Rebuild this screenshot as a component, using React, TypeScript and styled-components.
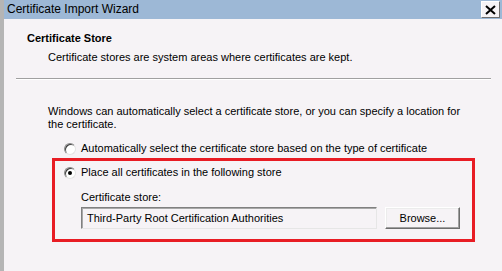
import React from 'react';
import styled, { createGlobalStyle } from 'styled-components';

const GlobalStyle = createGlobalStyle`
  html, body {
    margin: 0;
    padding: 0;
    background: #f6f3f6;
    overflow: hidden;
  }
  * {
    box-sizing: border-box;
  }
`;

const StyledWindow = styled.div`
  width: 502px;
  height: 271px;
  display: flex;
  background: #f6f3f6;
  font-family: 'Liberation Sans', Arial, sans-serif;
  font-size: 11px;
  line-height: 13px;
  color: #000;
`;

const StyledEdge = styled.div`
  width: 4px;
  background: #b5b5b5;
  flex-shrink: 0;
`;

const StyledMain = styled.div`
  flex: 1;
  display: flex;
  flex-direction: column;
`;

const StyledTitleBar = styled.header`
  height: 19px;
  background: #9db8d6;
  display: flex;
  align-items: center;
  justify-content: space-between;
  padding-left: 3px;
  padding-right: 2px;
  font-size: 12px;
`;

const StyledClose = styled.div`
  width: 19px;
  height: 17px;
  background: #f6f3f6;
  border-top: 1px solid #fff;
  border-left: 1px solid #fff;
  border-right: 1px solid #6e6e6e;
  border-bottom: 1px solid #6e6e6e;
  display: flex;
  align-items: center;
  justify-content: center;
`;

const StyledHeader = styled.section`
  padding: 13px 0 0 23px;
  height: 59px;
`;

const StyledHeading = styled.h1`
  margin: 0;
  font-size: 11px;
  line-height: 13px;
  font-weight: 700;
`;

const StyledSubHeading = styled.p`
  margin: 6px 0 0 21px;
`;

const StyledSeparator = styled.hr`
  margin: 0 0 0 12px;
  width: 475px;
  height: 2px;
  border: none;
  border-top: 1px solid #a0a0a0;
  border-bottom: 1px solid #fff;
`;

const StyledBody = styled.section`
  padding: 25px 0 0 44px;
  display: flex;
  flex-direction: column;
`;

const StyledText = styled.p`
  margin: 0;
  width: 420px;
`;

const StyledOptionRow = styled.label<{ inBox?: boolean }>`
  display: flex;
  align-items: center;
  gap: 5px;
  margin: ${({ inBox }) => (inBox ? '0' : '11px 0 0 16px')};
  height: 13px;
`;

const StyledRadio = styled.span<{ checked?: boolean }>`
  width: 12px;
  height: 12px;
  border-radius: 50%;
  background: #fff;
  border: 1px solid;
  border-color: #8a8a8a #e4e4e4 #e4e4e4 #8a8a8a;
  box-shadow: inset 1px 1px 0 #3f3f3f;
  display: flex;
  align-items: center;
  justify-content: center;
  flex-shrink: 0;
  &::after {
    content: '';
    width: 4px;
    height: 4px;
    border-radius: 50%;
    background: ${({ checked }) => (checked ? '#000' : 'transparent')};
  }
`;

const StyledGroup = styled.div`
  margin: 3px 0 0 4px;
  width: 423px;
  height: 84px;
  border: 3px solid #e81c24;
  padding: 5px 0 0 9px;
  display: flex;
  flex-direction: column;
`;

const StyledFieldLabel = styled.div`
  margin: 12px 0 0 17px;
`;

const StyledFieldRow = styled.div`
  display: flex;
  gap: 8px;
  margin: 3px 0 0 17px;
`;

const StyledInput = styled.div`
  width: 296px;
  height: 22px;
  padding: 0 5px;
  display: flex;
  align-items: center;
  border-top: 1px solid #808080;
  border-left: 1px solid #808080;
  border-right: 1px solid #e6e6e6;
  border-bottom: 1px solid #e6e6e6;
  box-shadow: inset 1px 1px 0 #a8a8a8;
  background: #f6f3f6;
  white-space: nowrap;
`;

const StyledButton = styled.button`
  width: 75px;
  height: 22px;
  padding: 0;
  font: inherit;
  color: #000;
  background: #f6f3f6;
  border-top: 1px solid #fff;
  border-left: 1px solid #fff;
  border-right: 1px solid #6e6e6e;
  border-bottom: 1px solid #6e6e6e;
  box-shadow: inset -1px -1px 0 #a0a0a0, inset 1px 1px 0 #ececec;
`;

const CloseIcon = () => (
  <svg width="11" height="10" viewBox="0 0 11 10">
    <path d="M1 1 L10 9 M10 1 L1 9" stroke="#000" strokeWidth="2" />
  </svg>
);

const App: React.FC = () => (
  <>
    <GlobalStyle />
    <StyledWindow>
      <StyledEdge />
      <StyledMain>
        <StyledTitleBar>
          <span>Certificate Import Wizard</span>
          <StyledClose>
            <CloseIcon />
          </StyledClose>
        </StyledTitleBar>
        <StyledHeader>
          <StyledHeading>Certificate Store</StyledHeading>
          <StyledSubHeading>Certificate stores are system areas where certificates are kept.</StyledSubHeading>
        </StyledHeader>
        <StyledSeparator />
        <StyledBody>
          <StyledText>
            Windows can automatically select a certificate store, or you can specify a location for the certificate.
          </StyledText>
          <StyledOptionRow>
            <StyledRadio />
            Automatically select the certificate store based on the type of certificate
          </StyledOptionRow>
          <StyledGroup>
            <StyledOptionRow inBox>
              <StyledRadio checked />
              Place all certificates in the following store
            </StyledOptionRow>
            <StyledFieldLabel>Certificate store:</StyledFieldLabel>
            <StyledFieldRow>
              <StyledInput>Third-Party Root Certification Authorities</StyledInput>
              <StyledButton type="button">Browse...</StyledButton>
            </StyledFieldRow>
          </StyledGroup>
        </StyledBody>
      </StyledMain>
    </StyledWindow>
  </>
);

export default App;
